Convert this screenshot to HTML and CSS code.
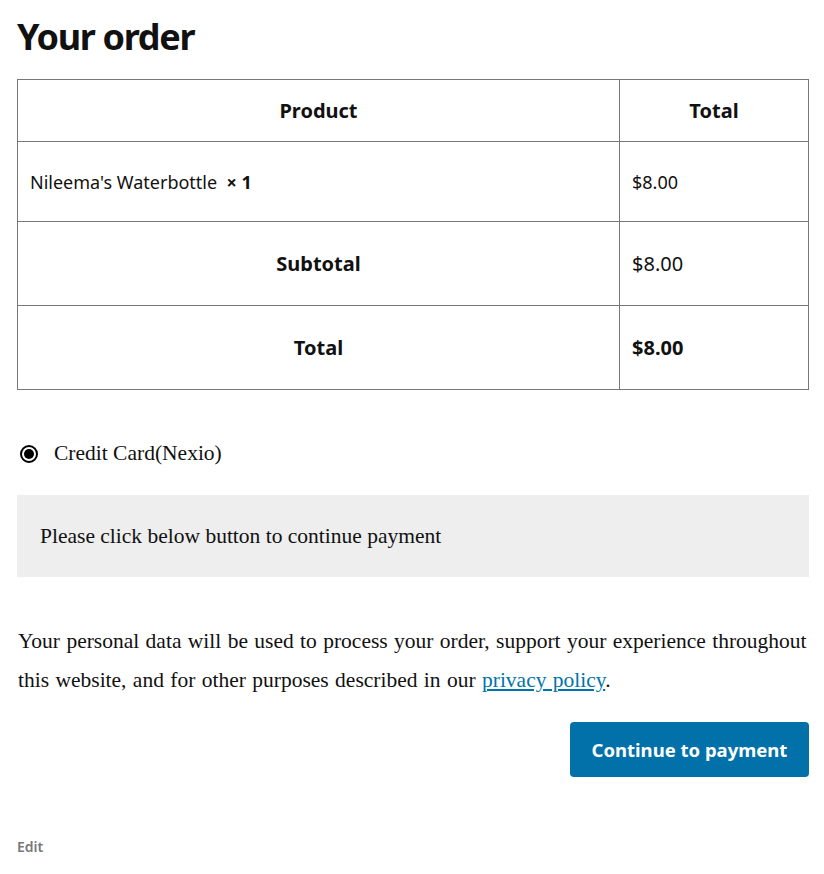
FILE: index.html
```html
<!DOCTYPE html>
<html>
<head>
<meta charset="utf-8">
<link rel="stylesheet" href="styles.css">
</head>
<body>
<main class="page">
  <h2 class="title">Your order</h2>
  <table class="order">
    <thead>
      <tr><th class="col-product">Product</th><th class="col-total">Total</th></tr>
    </thead>
    <tbody>
      <tr class="item"><td>Nileema's Waterbottle&nbsp; <strong class="qty">×&nbsp;1</strong></td><td>$8.00</td></tr>
    </tbody>
    <tfoot>
      <tr class="sub"><th>Subtotal</th><td>$8.00</td></tr>
      <tr class="grand"><th>Total</th><td><strong>$8.00</strong></td></tr>
    </tfoot>
  </table>

  <div class="method">
    <span class="radio"><span class="dot"></span></span>
    <label class="method-label">Credit Card(Nexio)</label>
  </div>
  <div class="box">Please click below button to continue payment</div>

  <p class="privacy">Your personal data will be used to process your order, support your experience throughout this website, and for other purposes described in our <a href="#">privacy policy</a>.</p>

  <div class="actions"><button class="pay">Continue to payment</button></div>

  <div class="edit">Edit</div>
</main>
</body>
</html>
```

FILE: styles.css
```css
html, body { margin: 0; padding: 0; background: #fff; }
.page {
  padding: 0 15px 0 17px;
  color: #111;
  font-family: "Noto Sans", "Open Sans", sans-serif;
}
.title {
  margin: 0;
  padding-top: 13px;
  font-size: 36px;
  font-weight: 700;
  line-height: 48px;
  letter-spacing: -1.3px;
}
.order {
  margin-top: 18px;
  width: 100%;
  border-collapse: collapse;
  font-size: 18px;
}
.order th, .order td {
  border: 1px solid #777;
  padding: 0 12px;
}
.order thead th { height: 61px; font-size: 20px; font-weight: 700; }
.col-total { width: 164px; }
.item td { height: 79px; }
.sub th, .sub td, .grand th, .grand td { height: 83px; font-size: 20px; }
.sub td { font-weight: 400; }
.grand td strong { font-weight: 700; }
.qty { font-weight: 700; }
.method {
  display: flex;
  align-items: center;
  gap: 16px;
  margin-top: 51px;
  padding-left: 3px;
  font-family: "Liberation Serif", serif;
  font-size: 21.5px;
}
.radio {
  width: 14px; height: 14px;
  border: 2px solid #000;
  border-radius: 50%;
  display: flex; align-items: center; justify-content: center;
}
.dot { width: 10px; height: 10px; border-radius: 50%; background: #000; }
.box {
  margin-top: 29px;
  background: #eee;
  padding: 27px 23px;
  height: 28px;
  line-height: 28px;
  font-family: "Liberation Serif", serif;
  font-size: 21.5px;
}
.privacy {
  margin: 45px 0 0 1px;
  font-family: "Liberation Serif", serif;
  font-size: 21.5px;
  line-height: 39px;
  word-spacing: 1px;
}
.privacy a { color: #0073aa; }
.actions { display: flex; justify-content: flex-end; margin-top: 22px; }
.pay {
  background: #0271a9;
  color: #fff;
  border: 0;
  border-radius: 4px;
  width: 239px;
  height: 55px;
  font-family: "Noto Sans", sans-serif;
  font-weight: 700;
  font-size: 18.5px;
  padding: 0;
}
.edit {
  margin-top: 60px;
  font-size: 14px;
  font-weight: 600;
  color: #777;
}
```
